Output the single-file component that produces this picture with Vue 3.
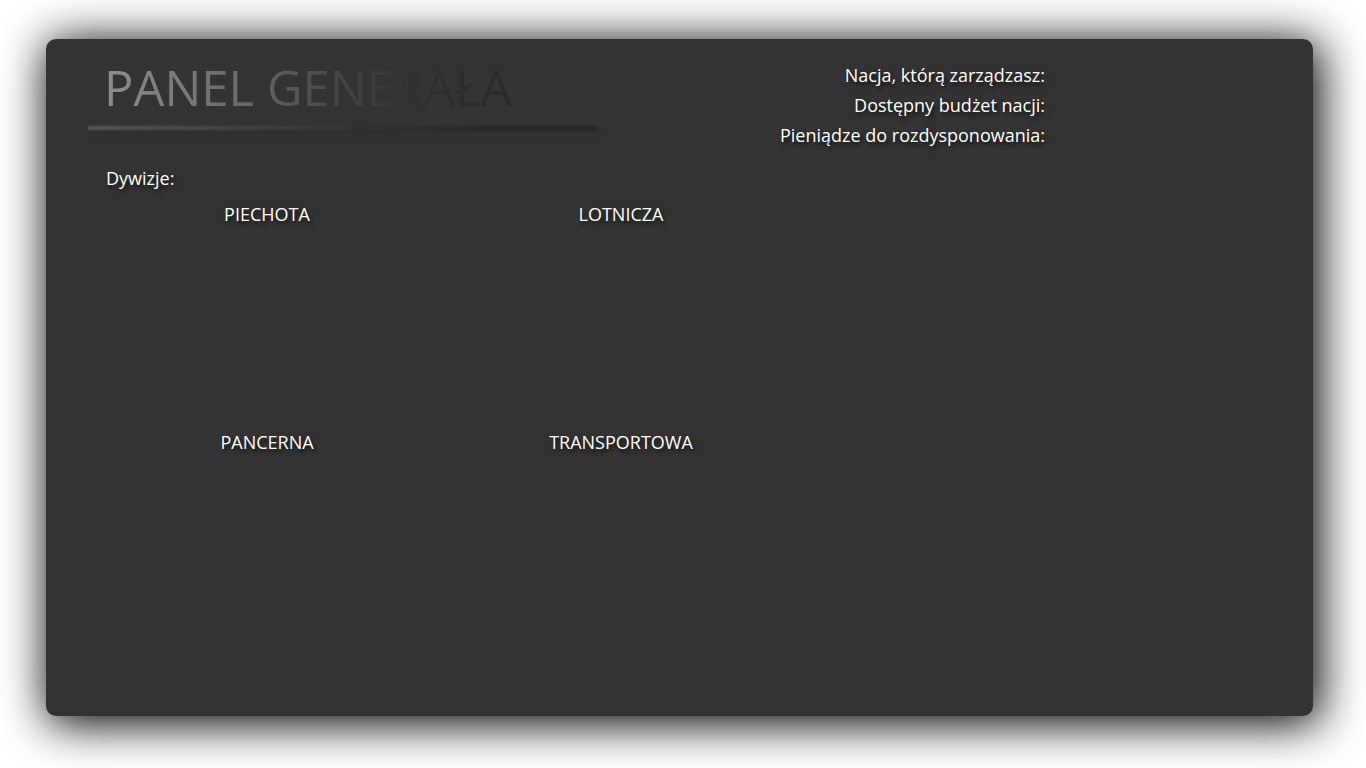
<script setup>
const summary = [
  'Nacja, którą zarządzasz:',
  'Dostępny budżet nacji:',
  'Pieniądze do rozdysponowania:',
]
const divisions = ['PIECHOTA', 'LOTNICZA', 'PANCERNA', 'TRANSPORTOWA']
</script>

<template>
  <div class="page">
    <main class="panel">
      <header class="top">
        <div class="heading">
          <h1>PANEL GENERAŁA</h1>
          <div class="rule"></div>
        </div>
        <ul class="summary">
          <li v-for="line in summary" :key="line">{{ line }}</li>
        </ul>
      </header>
      <section class="divisions">
        <h2>Dywizje:</h2>
        <div class="grid">
          <h3 v-for="name in divisions" :key="name">{{ name }}</h3>
        </div>
      </section>
    </main>
  </div>
</template>

<style>
body {
  margin: 0;
  background: #fff;
}
</style>

<style scoped>
.page {
  display: flex;
  box-sizing: border-box;
  min-height: 100vh;
  padding: 39px 53px 52px 46px;
  overflow: hidden;
  font-family: "Open Sans", "Noto Sans", sans-serif;
}
.panel {
  flex: 1;
  border-radius: 10px;
  background: #333;
  box-shadow: 4px 5px 46px 3px #000;
  color: #fff;
  font-size: 18px;
  line-height: 30px;
  text-shadow: 2px 3px 4px rgba(0, 0, 0, 0.7);
}
h1,
h2,
h3,
ul {
  margin: 0;
  padding: 0;
  font-size: inherit;
  font-weight: 400;
}
.top {
  display: flex;
  padding: 18px 268px 0 42px;
  justify-content: space-between;
}
.heading {
  width: 510px;
}
h1 {
  padding-left: 16px;
  font-size: 49px;
  line-height: 60px;
  white-space: nowrap;
  color: transparent;
  text-shadow: none;
  background: linear-gradient(93deg, #8c8c8c 4%, #6c6c6c 29%, #454545 49%, #353535 60%, #2f2f2f 66%, #292929 82%);
  -webkit-background-clip: text;
  background-clip: text;
}
.rule {
  height: 4px;
  margin-top: 9px;
  background: linear-gradient(90deg, #585858, #333 52%, #262626 78%);
  box-shadow: 1px 3px 4px rgba(0, 0, 0, 0.2);
  filter: blur(1px);
}
.summary {
  padding-top: 3px;
  list-style: none;
  text-align: right;
  white-space: nowrap;
}
.divisions {
  padding: 13px 60px 0;
}
.grid {
  display: grid;
  grid-template-columns: 354px 354px;
  grid-auto-rows: 228px;
  margin: 6px 0 0 -16px;
  text-align: center;
}
</style>
